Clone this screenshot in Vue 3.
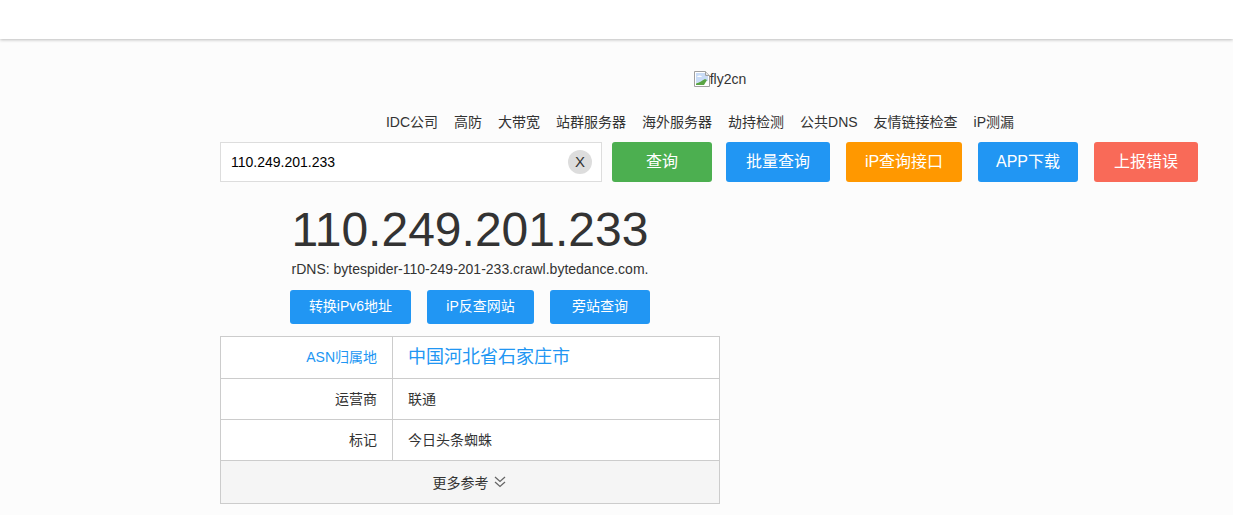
<script setup>
const navLinks = ['IDC公司', '高防', '大带宽', '站群服务器', '海外服务器', '劫持检测', '公共DNS', '友情链接检查', 'iP测漏']
const searchBtns = [
  { text: '查询', cls: 'b-query' },
  { text: '批量查询', cls: 'b-batch' },
  { text: 'iP查询接口', cls: 'b-api' },
  { text: 'APP下载', cls: 'b-app' },
  { text: '上报错误', cls: 'b-report' }
]
const toolBtns = [
  { text: '转换iPv6地址', cls: 't-v6' },
  { text: 'iP反查网站', cls: 't-rev' },
  { text: '旁站查询', cls: 't-side' }
]
</script>

<template>
  <div class="page">
    <header class="topbar"></header>

    <main class="wrap">
      <div class="logo">
        <svg class="broken" width="16" height="16" viewBox="0 0 16 16">
          <path d="M.5.5h11l4 4v11H.5z" fill="#fff" stroke="#a0a0a0" />
          <path d="M11.500.5v4h4" fill="#e4e4e4" stroke="#a0a0a0" />
          <path d="M2 2h9v3h3v5l-12 2z" fill="#c9dcf7" />
          <path d="M3 6c1-2 4-2 5 0z" fill="#fff" />
          <path d="M2 14v-1.500c3-.5 6-3 9-4.500l2 1-3 5z" fill="#5aa544" />
        </svg>
        <span>fly2cn</span>
      </div>

      <nav class="nav">
        <a v-for="link in navLinks" :key="link">{{ link }}</a>
      </nav>

      <div class="search">
        <div class="search-box">
          <span class="search-val">110.249.201.233</span>
          <span class="clear">X</span>
        </div>
        <a v-for="b in searchBtns" :key="b.text" class="sbtn" :class="b.cls">{{ b.text }}</a>
      </div>

      <section class="result">
        <h1 class="ip">110.249.201.233</h1>
        <p class="rdns">rDNS: bytespider-110-249-201-233.crawl.bytedance.com.</p>
        <div class="tools">
          <a v-for="t in toolBtns" :key="t.text" class="tbtn" :class="t.cls">{{ t.text }}</a>
        </div>

        <div class="info">
          <div class="row row-asn">
            <div class="label">ASN归属地</div>
            <div class="value">中国河北省石家庄市</div>
          </div>
          <div class="row">
            <div class="label">运营商</div>
            <div class="value">联通</div>
          </div>
          <div class="row">
            <div class="label">标记</div>
            <div class="value">今日头条蜘蛛</div>
          </div>
          <div class="more">
            更多参考
            <svg width="12" height="12" viewBox="0 0 12 12" fill="none" stroke="#666" stroke-width="1.300">
              <path d="M1 1l5 4.500L11 1M1 6l5 4.500L11 6" />
            </svg>
          </div>
        </div>
      </section>
    </main>
  </div>
</template>

<style>
html,
body {
  margin: 0;
  background: #fcfcfc;
}
</style>

<style scoped>
.page {
  height: 515px;
  overflow: hidden;
  font-family: "Liberation Sans", "Noto Sans CJK SC", sans-serif;
  font-size: 14px;
  color: #333;
  background: #fcfcfc;
}

.topbar {
  height: 39px;
  background: #fff;
  box-shadow: 0 1px 3px rgba(0, 0, 0, 0.25);
}

.wrap {
  width: 1000px;
  margin-left: 220px;
}

.logo {
  display: flex;
  justify-content: center;
  align-items: center;
  height: 16px;
  padding-top: 32px;
}

.broken {
  flex: none;
}

.nav {
  display: flex;
  justify-content: center;
  gap: 16px;
  width: 960px;
  margin-top: 25px;
  line-height: 20px;
}

.search {
  display: flex;
  margin-top: 10px;
}

.search-box {
  box-sizing: border-box;
  display: flex;
  align-items: center;
  justify-content: space-between;
  width: 382px;
  height: 40px;
  padding: 0 9px 0 10px;
  border: 1px solid #ddd;
  background: #fff;
  color: #000;
}

.search-val {
  margin-top: -1px;
}

.clear {
  width: 24px;
  height: 24px;
  border-radius: 50%;
  background: #ddd;
  color: #333;
  font-size: 15px;
  line-height: 24px;
  text-align: center;
}

.sbtn {
  height: 40px;
  margin-left: 16px;
  border-radius: 3px;
  color: #fff;
  font-size: 16px;
  line-height: 40px;
  text-align: center;
}

.b-query {
  width: 100px;
  margin-left: 10px;
  background: #4caf50;
}

.b-batch {
  width: 104px;
  margin-left: 14px;
  background: #2196f3;
}

.b-api {
  width: 116px;
  background: #ff9800;
}

.b-app {
  width: 100px;
  background: #2196f3;
}

.b-report {
  width: 104px;
  background: #f96a58;
}

.result {
  width: 500px;
  text-align: center;
}

.ip {
  margin: 21px 0 0;
  font-size: 48px;
  font-weight: 400;
  line-height: 54px;
}

.rdns {
  margin: 2px 0 0;
  line-height: 20px;
}

.tools {
  display: flex;
  justify-content: center;
  gap: 16px;
  margin-top: 11px;
}

.tbtn {
  height: 34px;
  border-radius: 3px;
  background: #2196f3;
  color: #fff;
  line-height: 33px;
}

.t-v6 {
  width: 121px;
}

.t-rev {
  width: 107px;
}

.t-side {
  width: 100px;
}

.info {
  box-sizing: border-box;
  margin-top: 12px;
  border: 1px solid #ccc;
  background: #fff;
}

.row {
  display: flex;
  height: 41px;
  border-bottom: 1px solid #ccc;
  box-sizing: border-box;
  line-height: 40px;
}

.row-asn {
  height: 42px;
}

.row-asn .label {
  color: #2196f3;
}

.row-asn .value {
  color: #2196f3;
  font-size: 18px;
}

.label {
  box-sizing: border-box;
  width: 172px;
  padding-right: 15px;
  border-right: 1px solid #ccc;
  text-align: right;
}

.value {
  padding-left: 15px;
  text-align: left;
}

.more {
  display: flex;
  justify-content: center;
  align-items: center;
  gap: 5px;
  height: 42px;
  padding-right: 2px;
  background: #f5f5f5;
}
</style>
